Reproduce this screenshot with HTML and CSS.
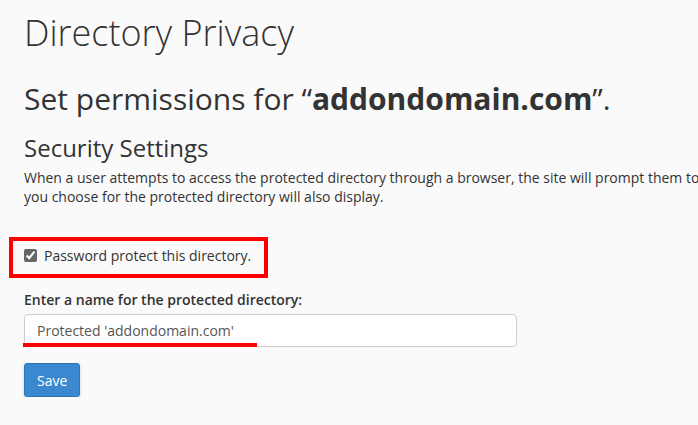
FILE: index.html
```html
<!DOCTYPE html>
<html lang="en">
<head>
  <meta charset="UTF-8">
  <meta name="viewport" content="width=device-width, initial-scale=1.0">
  <title>Directory Privacy</title>
  <link rel="stylesheet" href="styles.css">
</head>
<body>
  <div class="page">
    <h1>Directory Privacy</h1>
    <h2>Set permissions for “<b>addondomain.com</b>”.</h2>
    <h3>Security Settings</h3>
    <p class="desc">When a user attempts to access the protected directory through a browser, the site will prompt them to enter a username and password. The name that<br>you choose for the protected directory will also display.</p>

    <div class="highlight">
      <label class="check">
        <input type="checkbox" checked>
        <span>Password protect this directory.</span>
      </label>
    </div>

    <div class="field">
      <label for="dir-name">Enter a name for the protected directory:</label>
      <div class="input-wrap">
        <input type="text" id="dir-name" value="Protected 'addondomain.com'">
        <div class="underline"></div>
      </div>
    </div>

    <button class="btn">Save</button>
  </div>
</body>
</html>
```

FILE: styles.css
```css
body {
  margin: 0;
  padding: 0;
  background-color: #fafafa;
  color: #333;
  font-family: "Open Sans", Arial, sans-serif;
  overflow: hidden;
}
.page {
  padding: 9px 0 0 24px;
  width: 1100px;
}
h1 {
  font-size: 36px;
  font-weight: 300;
  margin: 0;
  line-height: 48px;
}
h2 {
  font-size: 30px;
  font-weight: 400;
  margin: 22px 0 0;
  line-height: 40px;
}
h2 b {
  font-weight: 700;
}
h3 {
  font-size: 24px;
  font-weight: 400;
  margin: 13px 0 0;
  line-height: 32px;
}
.desc {
  font-size: 14px;
  line-height: 19px;
  margin: 4px 0 0;
  white-space: nowrap;
}
.highlight {
  margin: 31px 0 0 -15px;
  width: 240px;
  border: 4px solid #f00;
  padding: 5px 0 9px 11px;
}
.check {
  display: flex;
  align-items: center;
  gap: 7px;
  font-size: 14px;
  color: #333;
}
.check input {
  margin: 0;
  width: 13px;
  height: 13px;
  accent-color: #666;
}
.field {
  margin-top: 12px;
}
.field label {
  display: block;
  font-size: 14px;
  font-weight: 600;
  margin-bottom: 5px;
}
.input-wrap {
  position: relative;
  width: 493px;
}
.input-wrap input {
  box-sizing: border-box;
  width: 493px;
  height: 33px;
  border: 1px solid #ccc;
  border-radius: 4px;
  background: #fff;
  padding: 0 12px;
  font-family: "Open Sans", Arial, sans-serif;
  font-size: 14px;
  color: #555;
}
.underline {
  position: absolute;
  left: -1px;
  top: 29px;
  width: 234px;
  height: 4px;
  background: #f00;
}
.btn {
  margin-top: 16px;
  background-color: #3a88d0;
  color: #fff;
  border: 1px solid #2f75b5;
  border-radius: 3px;
  padding: 0 12px;
  height: 34px;
  font-family: "Open Sans", Arial, sans-serif;
  font-size: 14px;
  box-shadow: 0 2px 3px rgba(0, 0, 0, 0.2);
}
```
